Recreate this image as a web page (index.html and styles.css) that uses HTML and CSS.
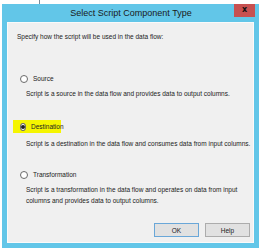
FILE: index.html
```html
<!DOCTYPE html>
<html>
<head>
    <meta charset="UTF-8">
    <title>Select Script Component Type</title>
    <link rel="stylesheet" href="styles.css">
</head>
<body>
    <div class="desktop-line"></div>
    <div class="window">
        <div class="titlebar">
            <span class="title">Select Script Component Type</span>
            <span class="close">x</span>
        </div>
        <form class="client" name="scripttype">
            <p class="intro">Specify how the script will be used in the data flow:</p>

            <div class="option first">
                <label class="choice"><span class="radio"></span>Source</label>
                <p class="desc">Script is a source in the data flow and provides data to output columns.</p>
            </div>

            <div class="option">
                <label class="choice"><span class="radio checked"></span><span class="mark">Destination</span></label>
                <p class="desc">Script is a destination in the data flow and consumes data from input columns.</p>
            </div>

            <div class="option">
                <label class="choice"><span class="radio"></span>Transformation</label>
                <p class="desc">Script is a transformation in the data flow and operates on data from input<br>columns and provides data to output columns.</p>
            </div>

            <div class="buttons">
                <button type="button" class="btn default">OK</button>
                <button type="button" class="btn">Help</button>
            </div>
        </form>
    </div>
</body>
</html>
```

FILE: styles.css
```css
html,
body {
    margin: 0;
    padding: 0;
    height: 100%;
}

body {
    background: #fff;
    overflow: hidden;
    font-family: 'Liberation Sans', Arial, sans-serif;
}

.desktop-line {
    position: absolute;
    left: 39px;
    top: 0;
    width: 1px;
    height: 4px;
    background: #7a8a99;
}

.window {
    margin: 4px 0 0 2px;
    width: 257px;
    height: 250px;
    background: #62c6e8;
    box-sizing: border-box;
    padding: 0 5px;
}

.titlebar {
    height: 18px;
    position: relative;
    display: flex;
    align-items: center;
    justify-content: center;
}

.title {
    font-size: 9px;
    color: #1a1a1a;
    margin-left: 1px;
}

.close {
    position: absolute;
    right: -1px;
    top: 0;
    width: 21px;
    height: 13px;
    background: #c75050;
    color: #111;
    font-weight: bold;
    font-size: 8px;
    line-height: 12px;
    text-align: center;
    font-family: 'DejaVu Sans', sans-serif;
}

.client {
    height: 221px;
    background: #f0f0f0;
    border: 1px solid #fafafa;
    box-sizing: border-box;
    padding: 10px 0 0 9px;
    display: flex;
    flex-direction: column;
    font-size: 6.5px;
    color: #222;
}

.intro {
    margin: 0;
    line-height: 8px;
}

.option {
    margin-top: 21px;
}

.option.first {
    margin-top: 33px;
}

.choice {
    display: flex;
    align-items: center;
    height: 9px;
    margin-left: 3px;
}

.radio {
    width: 8px;
    height: 8px;
    border: 1px solid #6a6a6a;
    border-radius: 50%;
    background: #fff;
    box-sizing: border-box;
    margin-right: 5px;
    display: flex;
    align-items: center;
    justify-content: center;
}

.radio.checked::after {
    content: '';
    width: 4px;
    height: 4px;
    border-radius: 50%;
    background: #222;
}

.choice:has(.checked) {
    background: #f5f500;
    margin-left: -4px;
    padding-left: 7px;
    width: 41px;
    height: 13px;
}

.desc {
    margin: 5px 0 0 9px;
    line-height: 11px;
}

.buttons {
    margin-top: auto;
    margin-bottom: 5px;
    display: flex;
    justify-content: flex-end;
    gap: 6px;
    padding-right: 3px;
}

.btn {
    width: 45px;
    height: 14px;
    padding: 0;
    border: 1px solid #acacac;
    background: #e1e1e1;
    font-family: inherit;
    font-size: 6.5px;
    color: #222;
}

.btn.default {
    border-color: #6aa7d8;
}
```
